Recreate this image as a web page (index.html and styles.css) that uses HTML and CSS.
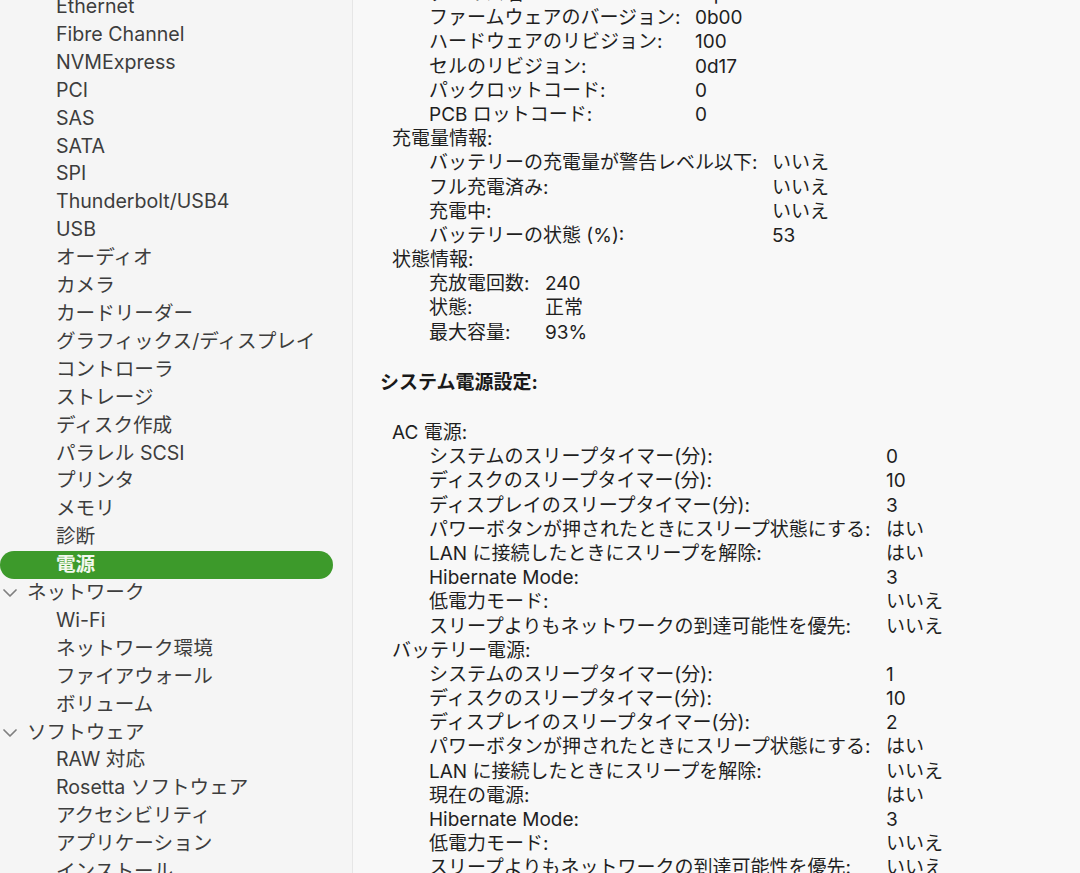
FILE: index.html
```html
<!DOCTYPE html>
<html lang="ja">
<head>
<meta charset="utf-8">
<title>システム情報 - 電源</title>
<link rel="stylesheet" href="styles.css">
</head>
<body>
<div class="window">
  <nav class="sidebar">
    <ul class="list">
      <li class="row item">Ethernet</li>
      <li class="row item">Fibre Channel</li>
      <li class="row item">NVMExpress</li>
      <li class="row item">PCI</li>
      <li class="row item">SAS</li>
      <li class="row item">SATA</li>
      <li class="row item">SPI</li>
      <li class="row item">Thunderbolt/USB4</li>
      <li class="row item">USB</li>
      <li class="row item">オーディオ</li>
      <li class="row item">カメラ</li>
      <li class="row item">カードリーダー</li>
      <li class="row item">グラフィックス/ディスプレイ</li>
      <li class="row item">コントローラ</li>
      <li class="row item">ストレージ</li>
      <li class="row item">ディスク作成</li>
      <li class="row item">パラレル SCSI</li>
      <li class="row item">プリンタ</li>
      <li class="row item">メモリ</li>
      <li class="row item">診断</li>
      <li class="row item selected">電源</li>
      <li class="row group"><svg class="chev" viewBox="0 0 14 8"><polyline points="1,1 7,7 13,1"/></svg><span>ネットワーク</span></li>
      <li class="row item">Wi-Fi</li>
      <li class="row item">ネットワーク環境</li>
      <li class="row item">ファイアウォール</li>
      <li class="row item">ボリューム</li>
      <li class="row group"><svg class="chev" viewBox="0 0 14 8"><polyline points="1,1 7,7 13,1"/></svg><span>ソフトウェア</span></li>
      <li class="row item">RAW 対応</li>
      <li class="row item">Rosetta ソフトウェア</li>
      <li class="row item">アクセシビリティ</li>
      <li class="row item">アプリケーション</li>
      <li class="row item">インストール</li>
    </ul>
  </nav>
  <main class="detail">
    <div class="content">
      <div class="grid l2 ga">
        <span>デバイス名:</span><span>bq40z651</span>
        <span>ファームウェアのバージョン:</span><span>0b00</span>
        <span>ハードウェアのリビジョン:</span><span>100</span>
        <span>セルのリビジョン:</span><span>0d17</span>
        <span>パックロットコード:</span><span>0</span>
        <span>PCB ロットコード:</span><span>0</span>
      </div>
      <div class="l1">充電量情報:</div>
      <div class="grid l2 gb">
        <span>バッテリーの充電量が警告レベル以下:</span><span>いいえ</span>
        <span>フル充電済み:</span><span>いいえ</span>
        <span>充電中:</span><span>いいえ</span>
        <span>バッテリーの状態 (%):</span><span>53</span>
      </div>
      <div class="l1">状態情報:</div>
      <div class="grid l2 gc">
        <span>充放電回数:</span><span>240</span>
        <span>状態:</span><span>正常</span>
        <span>最大容量:</span><span>93%</span>
      </div>
      <h2 class="heading">システム電源設定:</h2>
      <div class="l1">AC 電源:</div>
      <div class="grid l2 gd">
        <span>システムのスリープタイマー(分):</span><span>0</span>
        <span>ディスクのスリープタイマー(分):</span><span>10</span>
        <span>ディスプレイのスリープタイマー(分):</span><span>3</span>
        <span>パワーボタンが押されたときにスリープ状態にする:</span><span>はい</span>
        <span>LAN に接続したときにスリープを解除:</span><span>はい</span>
        <span>Hibernate Mode:</span><span>3</span>
        <span>低電力モード:</span><span>いいえ</span>
        <span>スリープよりもネットワークの到達可能性を優先:</span><span>いいえ</span>
      </div>
      <div class="l1">バッテリー電源:</div>
      <div class="grid l2 gd">
        <span>システムのスリープタイマー(分):</span><span>1</span>
        <span>ディスクのスリープタイマー(分):</span><span>10</span>
        <span>ディスプレイのスリープタイマー(分):</span><span>2</span>
        <span>パワーボタンが押されたときにスリープ状態にする:</span><span>はい</span>
        <span>LAN に接続したときにスリープを解除:</span><span>いいえ</span>
        <span>現在の電源:</span><span>はい</span>
        <span>Hibernate Mode:</span><span>3</span>
        <span>低電力モード:</span><span>いいえ</span>
        <span>スリープよりもネットワークの到達可能性を優先:</span><span>いいえ</span>
      </div>
    </div>
  </main>
</div>
</body>
</html>
```

FILE: styles.css
```css
* { box-sizing: border-box; }

html, body {
  margin: 0;
  padding: 0;
  width: 1080px;
  height: 873px;
  overflow: hidden;
  font-family: Inter, "Noto Sans CJK JP", sans-serif;
}

.window {
  display: flex;
  width: 1080px;
  height: 873px;
  overflow: hidden;
}

/* ---------- sidebar ---------- */
.sidebar {
  width: 353px;
  flex: none;
  background: #f5f5f5;
  border-right: 1px solid #e6e6e6;
  overflow: hidden;
}

.list {
  list-style: none;
  margin: -7px 0 0 0;
  padding: 0;
}

.row {
  height: 27.92px;
  line-height: 27.92px;
  margin-right: 19px;
  font-size: 19.6px;
  color: #3d3d3d;
  white-space: nowrap;
}

.item { padding-left: 56px; }

.group {
  display: flex;
  align-items: center;
  gap: 10px;
  padding-left: 3px;
}

.chev {
  width: 14px;
  height: 8px;
  fill: none;
  stroke: #808080;
  stroke-width: 1.7;
  stroke-linecap: round;
  stroke-linejoin: round;
}

.selected {
  background: #3d9a2b;
  border-radius: 14px;
  color: #f2f8ee;
  font-weight: 700;
}

/* ---------- detail ---------- */
.detail {
  flex: 1;
  background: #f8f8f8;
  overflow: hidden;
  padding-left: 27px;
}

.content {
  margin-top: -18px;
  font-size: 19px;
  color: #1f1f1f;
}

.content span,
.l1 {
  height: 24.2px;
  line-height: 24.2px;
  white-space: nowrap;
}

.l1 { padding-left: 12px; }

.l2 { padding-left: 49px; }

.grid {
  display: grid;
  grid-auto-rows: 24.2px;
}

.ga { grid-template-columns: 266px auto; }
.gb { grid-template-columns: 343px auto; }
.gc { grid-template-columns: 116px auto; }
.gd { grid-template-columns: 457px auto; }

.heading {
  margin: 26px 0 26px 0;
  height: 24.2px;
  line-height: 24.2px;
  font-size: 19px;
  font-weight: 700;
  color: #1a1a1a;
}
```
